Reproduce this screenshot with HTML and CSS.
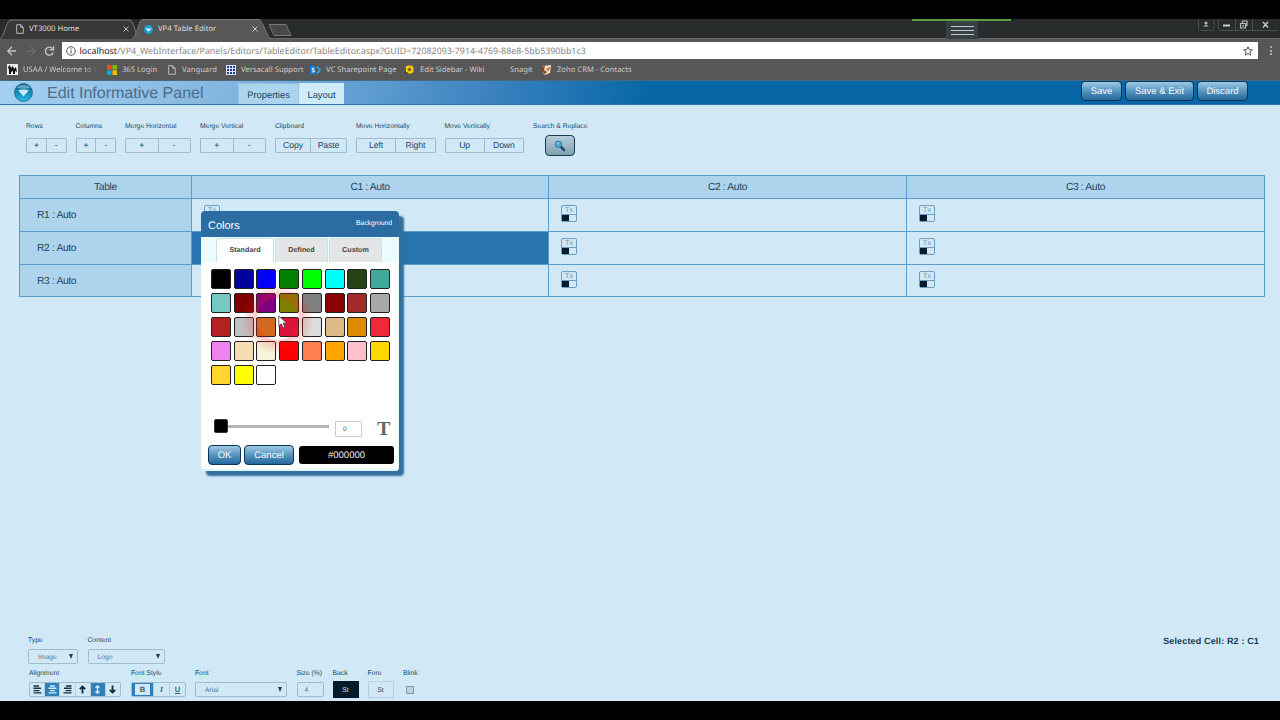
FILE: index.html
```
<!DOCTYPE html>
<html lang="en">
<head>
    <meta charset="UTF-8">
    <title>VP4 Table Editor</title>
    <link rel="stylesheet" href="styles.css">
</head>
<body>
    <div class="browser">
        <div class="tabstrip">
            <svg class="tab-shapes" width="300" height="20" viewBox="0 0 300 20">
                <path d="M0 20 C4 18 6 3 10 1 H130 C134 3 136 15 138 20" fill="#383838" stroke="#777" stroke-width="1"/>
                <path d="M132 20 C137 18 138 3 142 .5 H259 C264 3 266 17 271 20" fill="#575757" stroke="#777" stroke-width="1"/>
                <path d="M269 5.5 H286 L291 16.500 H274 Z" fill="#484848" stroke="#777" stroke-width="1"/>
            </svg>
            <div class="tab tab-home">
                <svg width="8" height="10" viewBox="0 0 8 10"><path d="M.7.7H4.700L7.300 3.300V9.300H.7Z M4.700.7V3.300H7.300" fill="none" stroke="#bbb"/></svg>
                <span class="tab-title">VT3000 Home</span>
                <svg class="tab-close" width="6" height="6" viewBox="0 0 6 6"><path d="M.5.5 5.500 5.500M5.500.5.5 5.500" stroke="#bbb"/></svg>
            </div>
            <div class="tab tab-editor">
                <svg width="9" height="9" viewBox="0 0 24 24"><circle cx="12" cy="12" r="12" fill="#1e9fd0"/><path d="M4 9H20L12 18Z" fill="#e8faff"/></svg>
                <span class="tab-title">VP4 Table Editor</span>
                <svg class="tab-close" width="6" height="6" viewBox="0 0 6 6"><path d="M.5.5 5.500 5.500M5.500.5.5 5.500" stroke="#ccc"/></svg>
            </div>
            <div class="grip"><i></i><i></i><i></i></div>
            <div class="window-buttons">
                <svg width="80" height="12" viewBox="0 0 80 12">
                    <path d="M.5 0V9Q.5 11.500 3 11.500H13.500Q16 11.500 16 9V0M20.500 0V9Q20.500 11.500 23 11.500H80M37.500 0V11M54.500 0V11" fill="none" stroke="#4b4d4e"/>
                    <circle cx="8" cy="4" r="1.500" fill="#bbb"/><path d="M5 7.500Q8 4.500 11 7.500Z" fill="#bbb"/>
                    <path d="M25 6.500H32" stroke="#ccc" stroke-width="2"/>
                    <path d="M42.500 4.500H47.500V9H42.500ZM44.500 4.500V2H49V6.500H47.500M44 6.800H46" fill="none" stroke="#bbb" stroke-width="1.200"/>
                    <path d="M65 3 70 8.500M70 3 65 8.500" stroke="#ccc" stroke-width="1.400"/>
                </svg>
            </div>
        </div>
        <div class="addressbar">
            <svg class="nav-icons" width="62" height="18" viewBox="0 0 62 18">
                <path d="M16 9H8M12 4.800 7.800 9 12 13.200" fill="none" stroke="#c4c4c4" stroke-width="1.300"/>
                <path d="M27 9H35M31 4.800 35.200 9 31 13.200" fill="none" stroke="#6e6e6e" stroke-width="1.300"/>
                <path d="M52.500 6.500A4 4 0 1 0 53.200 10.500M53.500 4V7.700H49.700" fill="none" stroke="#c4c4c4" stroke-width="1.400"/>
            </svg>
            <div class="url">
                <svg width="10" height="10" viewBox="0 0 10 10"><circle cx="5" cy="5" r="4.300" fill="none" stroke="#555"/><path d="M5 4.300V7.500M5 2.300V3.400" stroke="#555" stroke-width="1.100"/></svg>
                <span class="url-text"><b>localhost</b>/VP4_WebInterface/Panels/Editors/TableEditor/TableEditor.aspx?GUID=72082093-7914-4769-88e8-5bb5390bb1c3</span>
                <svg class="star" width="10" height="10" viewBox="0 0 10 10"><path d="M5 .8 6.200 3.700 9.400 3.900 7 6 7.700 9.100 5 7.400 2.300 9.100 3 6 .6 3.900 3.800 3.700Z" fill="none" stroke="#444" stroke-width=".9"/></svg>
            </div>
            <div class="menu-dots"><i></i><i></i><i></i></div>
        </div>
        <div class="bookmarks">
            <span class="bookmark bm-usaa"><svg width="11" height="11" viewBox="0 0 11 11"><rect width="11" height="11" fill="#eee"/><path d="M1 3 3 1 4 4 6 2 7 5 9 3 10 8 8 7V10H6V7L4 8V10H2V6Z" fill="#111"/></svg><span class="bm-fade">USAA / Welcome to U</span></span>
            <span class="bookmark bm-365"><svg width="10" height="10" viewBox="0 0 10 10"><path d="M0 0H4.600V4.600H0Z" fill="#f25022"/><path d="M5.400 0H10V4.600H5.400Z" fill="#7fba00"/><path d="M0 5.400H4.600V10H0Z" fill="#00a4ef"/><path d="M5.400 5.400H10V10H5.400Z" fill="#ffb900"/></svg><span>365 Login</span></span>
            <span class="bookmark bm-vanguard"><svg width="8" height="10" viewBox="0 0 8 10"><path d="M.7.7H4.700L7.300 3.300V9.300H.7Z M4.700.7V3.300H7.300" fill="none" stroke="#bbb"/></svg><span>Vanguard</span></span>
            <span class="bookmark bm-versacall"><svg width="10" height="10" viewBox="0 0 10 10"><rect width="10" height="10" fill="#dde8ff"/><path d="M1 1H3V3H1ZM4 1H6V3H4ZM7 1H9V3H7ZM1 4H3V6H1ZM4 4H6V6H4ZM7 4H9V6H7ZM1 7H3V9H1ZM4 7H6V9H4ZM7 7H9V9H7Z" fill="#1b3f9a"/></svg><span>Versacall Support</span></span>
            <span class="bookmark bm-sharepoint"><svg width="11" height="10" viewBox="0 0 11 10"><path d="M0 1 6 0V10L0 9Z" fill="#0f78d0"/><path d="M4.500 3.200H2.200V5H4.200V6.900H1.700" fill="none" stroke="#fff"/><path d="M7 1.500 10 5 7 8.500" fill="none" stroke="#2ea3f5" stroke-width="1.800"/></svg><span>VC Sharepoint Page</span></span>
            <span class="bookmark bm-wiki"><svg width="9" height="9" viewBox="0 0 9 9"><rect x=".5" y=".5" width="8" height="8" rx="3" fill="#f2cc0c"/><circle cx="4.500" cy="4.500" r="1.800" fill="#8c6c10"/><path d="M0 3V8H3" fill="none" stroke="#332b10"/></svg><span>Edit Sidebar - Wiki</span></span>
            <span class="bookmark bm-snagit"><span>Snagit</span></span>
            <span class="bookmark bm-zoho"><svg width="11" height="10" viewBox="0 0 11 10"><path d="M2 1 10 0 9 8 4 10 1 7Z" fill="#f4dfc0"/><path d="M1 2 4 1 3 5 6 7 4 9 1 7Z" fill="#7b4a22"/><path d="M6 3 9 2 8 6 5 5Z" fill="#d9733c"/></svg><span>Zoho CRM - Contacts</span></span>
        </div>
    </div>

    <div class="app-header">
        <svg class="logo" width="19" height="19" viewBox="0 0 19 19">
            <defs><linearGradient id="orb" x1="0" y1="0" x2="0" y2="1"><stop offset="0" stop-color="#1a5c86"/><stop offset=".5" stop-color="#1787b5"/><stop offset="1" stop-color="#25c3ea"/></linearGradient></defs>
            <circle cx="9.500" cy="9.500" r="9" fill="url(#orb)" stroke="#1b6992" stroke-width=".8"/>
            <path d="M2.500 4.500Q9.500-1 16.500 4.500Q9.500 7 2.500 4.500Z" fill="#7dbbdc" opacity=".7"/>
            <path d="M4 7.200Q9.500 5.800 15 7.200L9.500 13.500Z" fill="#c3ebf8"/>
        </svg>
        <h1>Edit Informative Panel</h1>
        <div class="page-tabs">
            <span class="page-tab">Properties</span>
            <span class="page-tab active">Layout</span>
        </div>
        <div class="header-actions">
            <button class="btn btn-save">Save</button>
            <button class="btn btn-exit">Save &amp; Exit</button>
            <button class="btn btn-discard">Discard</button>
        </div>
    </div>

    <div class="content">
        <div class="toolbar">
            <div class="tool small"><label>Rows</label><div class="pair"><span>+</span><span>-</span></div></div>
            <div class="tool small"><label>Columns</label><div class="pair"><span>+</span><span>-</span></div></div>
            <div class="tool medium"><label>Merge Horizontal</label><div class="pair"><span>+</span><span>-</span></div></div>
            <div class="tool medium"><label>Merge Vertical</label><div class="pair"><span>+</span><span>-</span></div></div>
            <div class="tool clip"><label>Clipboard</label><div class="pair"><span>Copy</span><span>Paste</span></div></div>
            <div class="tool large"><label>Move Horizontally</label><div class="pair"><span>Left</span><span>Right</span></div></div>
            <div class="tool large"><label>Move Vertically</label><div class="pair"><span>Up</span><span>Down</span></div></div>
            <div class="tool search">
                <label>Search &amp; Replace</label>
                <button class="search-btn">
                    <svg width="12" height="12" viewBox="0 0 12 12"><path d="M6.500 6.500 10 10" stroke="#174f78" stroke-width="2.600" stroke-linecap="round"/><circle cx="4.500" cy="4.300" r="3.200" fill="#5ba9cc" stroke="#28749f"/><path d="M3 4Q3.300 2.500 5 2.500" fill="none" stroke="#b5dfee"/></svg>
                </button>
            </div>
        </div>

        <div class="table">
            <div class="cell head">Table</div>
            <div class="cell head">C1 : Auto</div>
            <div class="cell head">C2 : Auto</div>
            <div class="cell head">C3 : Auto</div>

            <div class="cell row-head">R1 : Auto</div>
            <div class="cell"><div class="tx"><b>Tx</b><i></i></div></div>
            <div class="cell"><div class="tx"><b>Tx</b><i></i></div></div>
            <div class="cell"><div class="tx"><b>Tx</b><i></i></div></div>

            <div class="cell row-head">R2 : Auto</div>
            <div class="cell selected"></div>
            <div class="cell"><div class="tx"><b>Tx</b><i></i></div></div>
            <div class="cell"><div class="tx"><b>Tx</b><i></i></div></div>

            <div class="cell row-head">R3 : Auto</div>
            <div class="cell"></div>
            <div class="cell"><div class="tx"><b>Tx</b><i></i></div></div>
            <div class="cell"><div class="tx"><b>Tx</b><i></i></div></div>
        </div>

        <div class="properties">
            <div class="prop-row first">
                <div class="prop p-type"><label>Type</label><div class="select">Image<em></em></div></div>
                <div class="prop p-content"><label>Content</label><div class="select">Logo<em></em></div></div>
                <div class="selected-cell">Selected Cell: R2 : C1</div>
            </div>
            <div class="prop-row">
                <div class="prop p-align">
                    <label>Alignment</label>
                    <div class="icon-group">
                        <span><svg width="9" height="9" viewBox="0 0 9 9"><path d="M.5 1H6M.5 3.300H8M.5 5.600H6.500M.5 7.900H8.500" stroke="#17313f" stroke-width="1.400"/></svg></span>
                        <span class="on"><svg width="9" height="9" viewBox="0 0 9 9"><path d="M2 1H7M.5 3.300H8.500M2 5.600H7M.5 7.900H8.500" stroke="#cfeafa" stroke-width="1.400"/></svg></span>
                        <span><svg width="9" height="9" viewBox="0 0 9 9"><path d="M3 1H8.500M1 3.300H8.500M2.500 5.600H8.500M.5 7.900H8.500" stroke="#17313f" stroke-width="1.400"/></svg></span>
                        <span><svg width="9" height="9" viewBox="0 0 9 9"><path d="M4.500 8.500V1.500M1.800 4.200 4.500 1.500 7.200 4.200" fill="none" stroke="#102a38" stroke-width="1.800"/></svg></span>
                        <span class="on"><svg width="9" height="9" viewBox="0 0 9 9"><path d="M4.500 1V8M2.500 2.800 4.500.8 6.500 2.800M2.500 6.200 4.500 8.200 6.500 6.200" fill="none" stroke="#cfeafa" stroke-width="1.400"/></svg></span>
                        <span><svg width="9" height="9" viewBox="0 0 9 9"><path d="M4.500.5V7.500M1.800 4.800 4.500 7.500 7.200 4.800" fill="none" stroke="#102a38" stroke-width="1.800"/></svg></span>
                    </div>
                </div>
                <div class="prop p-style">
                    <label>Font Style</label>
                    <div class="icon-group"><span class="bold">B</span><span class="italic">I</span><span class="underline">U</span></div>
                </div>
                <div class="prop p-font"><label>Font</label><div class="select">Arial<em></em></div></div>
                <div class="prop p-size"><label>Size (%)</label><div class="select">4</div></div>
                <div class="prop p-back"><label>Back</label><div class="sample dark">St</div></div>
                <div class="prop p-fore"><label>Fore</label><div class="sample">St</div></div>
                <div class="prop p-blink"><label>Blink</label><div class="checkbox"></div></div>
            </div>
        </div>
    </div>

    <div class="dialog">
        <div class="dialog-head"><span class="dialog-title">Colors</span><span class="dialog-target">Background</span></div>
        <div class="dialog-tabs">
            <span class="dialog-tab current">Standard</span>
            <span class="dialog-tab">Defined</span>
            <span class="dialog-tab">Custom</span>
        </div>
        <div class="dialog-body">
            <div class="swatches" id="swatches"></div>
            <div class="slider-row">
                <div class="slider"><div class="handle"></div></div>
                <div class="opacity">0</div>
                <div class="text-icon">T</div>
            </div>
            <div class="dialog-actions">
                <button class="btn btn-ok">OK</button>
                <button class="btn btn-cancel">Cancel</button>
                <div class="hex">#000000</div>
            </div>
        </div>
    </div>

    <div class="click-glow"></div>
    <svg class="cursor" width="10" height="14" viewBox="0 0 10 14"><path d="M.8.8V11L3.200 8.800 5 12.800 6.800 12 5 8.200H8.600Z" fill="#fff" stroke="#444" stroke-width=".8"/></svg>

    <script>
        var colors = [
            '#000000', '#00009c', '#0000ff', '#008000', '#00ff00', '#00ffff', '#264216', '#40a898',
            '#76c8c4', '#800000', '#800080', '#808000', '#808080', '#8b0000', '#a52a2a', '#a9a9a9',
            '#b22222', '#c0c0c0', '#d2691e', '#dc143c', '#dcdcdc', '#deb887', '#e08a00', '#f02838',
            '#ee82ee', '#f5deb3', '#f5f5dc', '#ff0000', '#ff7f50', '#ffa500', '#ffc0cb', '#ffd700',
            '#ffd52e', '#ffff00', '#ffffff'
        ];
        var box = document.getElementById('swatches');
        colors.forEach(function (color) {
            var swatch = document.createElement('span');
            swatch.className = 'swatch';
            swatch.style.backgroundColor = color;
            box.appendChild(swatch);
        });
    </script>
</body>
</html>
```
FILE: styles.css
```
* {
    box-sizing: border-box;
}

body {
    margin: 0;
    width: 1280px;
    height: 720px;
    padding: 19px 0;
    overflow: hidden;
    display: flex;
    flex-direction: column;
    background: #000;
    font-family: "Liberation Sans", Arial, sans-serif;
    color: #21475f;
    text-rendering: geometricPrecision;
}

svg {
    display: block;
    flex: none;
}

button {
    padding: 0;
    font-family: inherit;
    text-rendering: inherit;
}

/* browser chrome */
.browser {
    height: 61px;
    flex: none;
    background: #575757;
    font-family: "Noto Sans", sans-serif;
}

.tabstrip {
    position: relative;
    height: 20px;
    display: flex;
    background: #292c2d;
    border-bottom: 1px solid #696969;
}

.tab-shapes {
    position: absolute;
    left: 0;
    top: 0;
}

.tab {
    position: relative;
    display: flex;
    align-items: center;
    height: 20px;
    color: #ddd;
    font-size: 7.7px;
}

.tab-home {
    width: 129px;
    padding-left: 16px;
}

.tab-home .tab-title {
    margin-left: 5px;
}

.tab-editor {
    width: 129px;
    padding-left: 15px;
}

.tab-editor .tab-title {
    margin-left: 5px;
}

.tab-close {
    margin-left: auto;
}

.grip {
    width: 32px;
    height: 20px;
    margin-left: 688px;
    padding: 7px 4px 0 5px;
    background: #374045;
}

.grip i {
    display: block;
    height: 1px;
    margin-bottom: 3px;
    background: #c4ccd0;
}

.tabstrip::after {
    content: "";
    position: absolute;
    left: 912px;
    top: 0;
    width: 99px;
    height: 2px;
    background: #5c9d43;
}

.window-buttons {
    margin-left: 220px;
}

.addressbar {
    height: 20px;
    padding-top: 3px;
    display: flex;
    align-items: center;
}

.url {
    width: 1196px;
    height: 17px;
    padding: 0 5px 0 4px;
    display: flex;
    align-items: center;
    background: #fff;
    color: #858585;
    font-size: 8.88px;
}

.url-text {
    margin-left: 3.5px;
    line-height: 16px;
    white-space: nowrap;
}

.url b {
    color: #222;
    font-weight: normal;
}

.star {
    margin-left: auto;
}

.menu-dots {
    margin-left: 12px;
}

.menu-dots i {
    display: block;
    width: 2px;
    height: 2px;
    margin: 1.5px 0;
    background: #aaa;
}

.bookmarks {
    height: 21px;
    display: flex;
    align-items: center;
    color: #ccc;
    font-size: 7.65px;
    white-space: nowrap;
}

.bookmark {
    display: flex;
    align-items: center;
    gap: 5px;
}

.bm-usaa {
    width: 100px;
    margin-left: 7px;
}

.bm-fade {
    mask-image: linear-gradient(to right, #000 80%, transparent);
}

.bm-365 { width: 61px; }
.bm-vanguard { width: 58px; gap: 6px; }
.bm-versacall { width: 84px; }
.bm-sharepoint { width: 95px; }
.bm-wiki { width: 105px; gap: 6px; }
.bm-snagit { width: 31px; }

/* application header */
.app-header {
    height: 25px;
    flex: none;
    display: flex;
    border-top: 1px solid #47687f;
    border-bottom: 1px solid #2575aa;
    background: linear-gradient(100deg, #a4d0f0 0, #84b6df 220px, #5d9bd0 370px, #367fbd 500px, #0767a6 640px);
}

.logo {
    margin: 2px 0 0 14px;
}

h1 {
    width: 191px;
    margin: 0 0 0 14px;
    line-height: 25px;
    font-size: 16px;
    font-weight: normal;
    color: #4d6c87;
}

.page-tabs {
    display: flex;
    padding-top: 2px;
}

.page-tab {
    width: 61px;
    line-height: 21px;
    text-align: center;
    font-size: 9.4px;
    color: #21475f;
    background: #acd4ec;
    border: 1px solid #98c4df;
    border-bottom: 0;
}

.page-tab.active {
    width: 45px;
    background: #cfebfa;
    border-color: #cfebfa;
}

.header-actions {
    display: flex;
    gap: 3px;
    margin-left: auto;
    padding: 0 32px 0 0;
}

.btn {
    height: 20px;
    padding-top: 1px;
    border: 1px solid #09345a;
    border-radius: 4px;
    background: linear-gradient(#9dc9e6, #5795bf 50%, #22689c);
    color: #f3faff;
    font-size: 9.5px;
}

.btn-save { width: 41px; }
.btn-exit { width: 69px; }
.btn-discard { width: 51px; }

/* editor area */
.content {
    flex: 1;
    display: flex;
    flex-direction: column;
    background: #d1e9f7;
}

.toolbar {
    height: 70px;
    flex: none;
    display: flex;
    gap: 9px;
    padding: 17px 0 0 26px;
}

.tool label,
.prop label {
    display: block;
    white-space: nowrap;
    font-size: 6.75px;
    line-height: 10px;
}

.small { width: 40.5px; }
.medium { width: 66px; }
.clip { width: 72px; }
.large { width: 79.5px; }
.search { width: 56px; }

.pair {
    height: 15px;
    margin-top: 6px;
    display: flex;
    border: 1px solid #9fbdd0;
    border-radius: 1px;
    font-size: 8.7px;
    letter-spacing: -0.1px;
    line-height: 13px;
    text-align: center;
}

.pair span {
    flex: 1;
}

.clip .pair span:first-child {
    flex: none;
    width: 34px;
}

.pair span + span {
    border-left: 1px solid #9fbdd0;
}

.search-btn {
    width: 30px;
    height: 21px;
    margin: 3px 0 0 12px;
    display: flex;
    align-items: center;
    justify-content: center;
    border: 1px solid #1d3a4b;
    border-radius: 4px;
    background: linear-gradient(#b4ced9, #7fa0b0);
}

.table {
    width: 1246px;
    margin-left: 19px;
    flex: none;
    display: grid;
    grid-template-columns: 171px 356px 357px 357px;
    grid-template-rows: 22px 32px 32px 31px;
    gap: 1px;
    padding: 1px;
    background: #5a9dcb;
    font-size: 10.3px;
    letter-spacing: -0.35px;
}

.cell {
    background: #d1e9f7;
    padding: 6px 0 0 12px;
}

.cell.head {
    padding: 0;
    line-height: 23px;
    text-align: center;
    background: #add3ed;
}

.cell.row-head {
    padding: 0 0 0 17px;
    line-height: 33px;
    background: #add3ed;
}

.cell.selected {
    background: #2874b0;
}

.tx {
    width: 16px;
    height: 17px;
    border: 1px solid #6d9dbf;
    border-radius: 2px;
}

.tx b {
    display: block;
    height: 9px;
    border-bottom: 1px solid #6d9dbf;
    font-size: 7px;
    letter-spacing: 0;
    line-height: 9px;
    font-weight: normal;
    text-align: center;
    color: #6d94ad;
}

.tx i {
    display: block;
    width: 7px;
    height: 6px;
    background: #061c2e;
}

/* cell properties */
.properties {
    margin-top: auto;
}

.prop-row {
    height: 32px;
    display: flex;
    padding-left: 29px;
}

.prop-row.first {
    height: 33px;
    padding-left: 28px;
}

.prop label {
    margin-bottom: 3px;
}

.p-type { width: 59.5px; }
.p-align { width: 102px; }
.p-style { width: 64px; }
.p-font { width: 101.5px; }
.p-size { width: 36px; }
.p-back { width: 35px; }
.p-fore { width: 35.5px; }

.select {
    position: relative;
    height: 15px;
    padding-left: 9px;
    border: 1px solid #9fbdd0;
    border-radius: 2px;
    font-size: 6.75px;
    line-height: 16px;
    color: #55758a;
}

.select em {
    position: absolute;
    right: 4px;
    top: 4px;
    border: 2.5px solid transparent;
    border-top: 5px solid #173a50;
    border-bottom: 0;
}

.p-type .select { width: 50px; }
.p-content .select { width: 77px; }
.p-font .select { width: 92px; }
.p-size .select { width: 27px; padding-left: 7px; }

.selected-cell {
    margin: 0 21px 0 auto;
    font-size: 9px;
    letter-spacing: 0.15px;
    line-height: 11px;
    font-weight: bold;
    color: #173a50;
}

.icon-group {
    width: 92px;
    height: 15px;
    display: flex;
    border: 1px solid #9fbdd0;
    border-radius: 2px;
    font-size: 7.5px;
    font-weight: bold;
    line-height: 13px;
    text-align: center;
}

.icon-group span {
    flex: 1;
    display: flex;
    align-items: center;
    justify-content: center;
    border-left: 1px solid #b5d0e0;
}

.icon-group span:first-child {
    border-left: 0;
}

.icon-group .on {
    background: #2f7fb9;
}

.p-style .icon-group {
    width: 55px;
    color: #3c5d73;
}

.icon-group .bold {
    border: 1px solid #2f7fb9;
    border-width: 1px 3px;
}

.icon-group .bold:first-child {
    border-left: 3px solid #2f7fb9;
}

.italic {
    font-style: italic;
    font-family: "Liberation Serif", serif;
}

.underline {
    text-decoration: underline;
}

.sample {
    width: 26px;
    height: 17px;
    margin-top: -1px;
    border: 1px solid #b5d0e0;
    font-size: 6.75px;
    line-height: 17px;
    text-align: center;
}

.sample.dark {
    border-color: #031b2b;
    background: #031b2b;
    color: #d1e9f7;
}

.checkbox {
    width: 8px;
    height: 8px;
    margin: 7px 0 0 3px;
    border: 1px solid #8298a5;
    background: #c3d3dc;
}

/* color picker */
.dialog {
    position: absolute;
    left: 201px;
    top: 211px;
    width: 198px;
    height: 260px;
    border-radius: 4px;
    background: #fff;
    box-shadow: 5px 5px 2px #33709f;
}

.dialog-head {
    height: 26px;
    display: flex;
    justify-content: space-between;
    padding: 0 7px;
    border-radius: 4px 4px 0 0;
    background: #2b6da2;
    color: #fff;
}

.dialog-title {
    font-size: 11px;
    line-height: 30px;
}

.dialog-target {
    font-size: 6.75px;
    line-height: 25px;
}

.dialog-tabs {
    height: 25px;
    display: flex;
    gap: 1px;
    padding: 1px 16px 0 15px;
    background: #ebfcff;
    font-size: 7.2px;
    font-weight: bold;
    line-height: 22px;
    text-align: center;
    color: #444;
}

.dialog-tab {
    width: 53px;
    border: 1px solid #ccdfe4;
    border-bottom: 0;
    border-radius: 3px 3px 0 0;
    background: #e3e5e6;
}

.dialog-tab.current {
    width: 58px;
    background: #fff;
}

.dialog-body {
    height: 209px;
    padding: 7px 0 0 7px;
    border: 1px solid #e0f5fb;
    border-width: 0 1px 2px 0;
    border-radius: 0 0 4px 4px;
}

.swatches {
    height: 150px;
    display: grid;
    grid-template-columns: repeat(8, 20px);
    grid-auto-rows: 20px;
    column-gap: 2.72px;
    row-gap: 4.1px;
    margin-left: 3px;
}

.swatch {
    border: 1px solid #222;
    border-radius: 2px;
}

.slider-row {
    height: 31px;
    display: flex;
}

.slider {
    width: 109px;
    height: 3px;
    margin: 6px 0 0 12px;
    background: #b5b5b5;
}

.handle {
    position: relative;
    width: 14px;
    height: 14px;
    margin: -6px 0 0 -6px;
    border: 1px solid #333;
    border-radius: 2px;
    background: #000;
}

.opacity {
    flex: none;
    width: 27px;
    height: 16px;
    margin: 2px 0 0 6px;
    padding-left: 7px;
    border: 1px solid #ccc;
    border-radius: 1px;
    font-size: 6.5px;
    line-height: 15px;
    color: #555;
}

.text-icon {
    margin: 0 0 0 15px;
    font: bold 20px/21px "Liberation Serif", serif;
    color: #666;
}

.dialog-actions {
    display: flex;
    margin-top: -5px;
}

.btn-ok { width: 33px; }
.btn-cancel { width: 50px; margin-left: 3px; }

.hex {
    width: 95px;
    height: 18px;
    margin: 1px 0 0 5px;
    border-radius: 3px;
    background: #000;
    color: #eee;
    font-size: 9.5px;
    line-height: 19px;
    text-align: center;
}

/* mouse pointer with click highlight */
.click-glow {
    position: absolute;
    left: 242px;
    top: 283px;
    width: 72px;
    height: 72px;
    border-radius: 50%;
    background: radial-gradient(circle, transparent 20px, rgba(255, 30, 30, 0.25) 22px, transparent 36px);
}

.cursor {
    position: absolute;
    left: 278px;
    top: 315px;
}
```
